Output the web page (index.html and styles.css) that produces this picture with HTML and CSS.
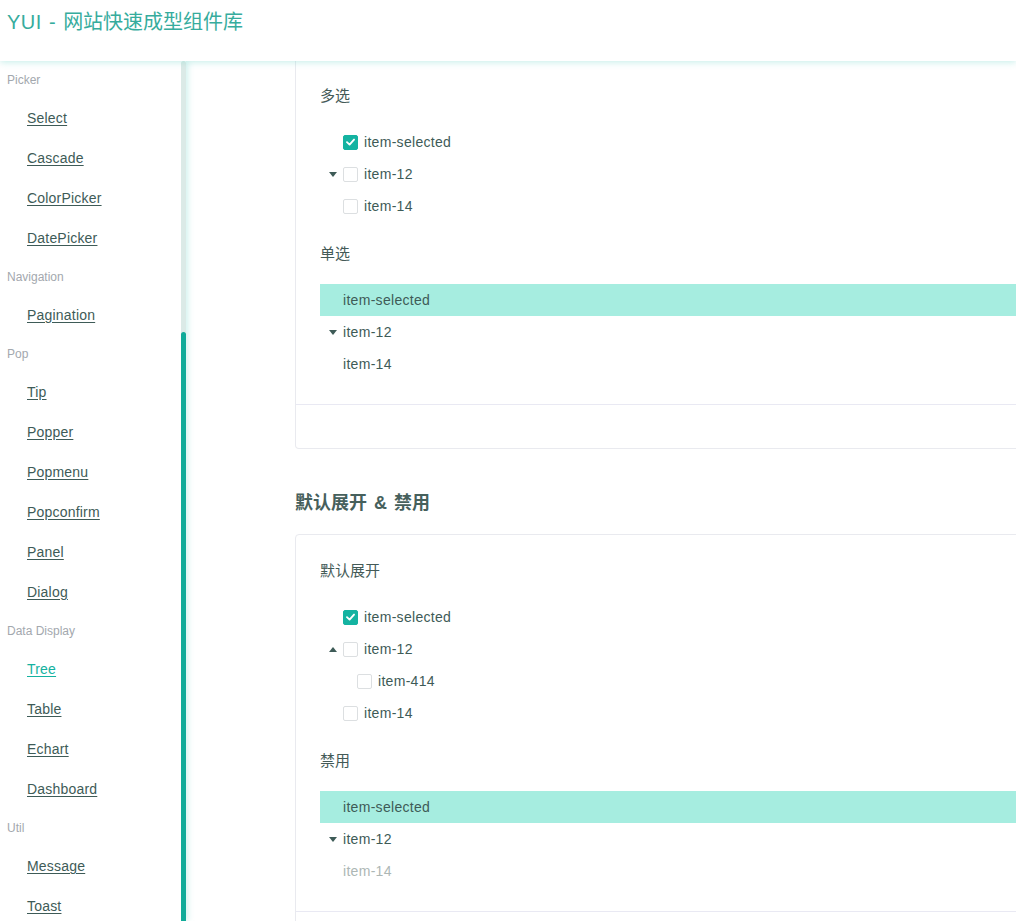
FILE: index.html
```html
<!DOCTYPE html>
<html lang="zh-CN">
<head>
<meta charset="utf-8">
<title>YUI - 网站快速成型组件库</title>
<link rel="stylesheet" href="styles.css">
</head>
<body>
<header class="header">
  <div class="brand"><span class="brand-en">YUI - </span>网站快速成型组件库</div>
</header>
<div class="layout">
  <aside class="sidebar">
    <nav class="nav">
      <div class="nav-cat">Picker</div>
      <a class="nav-link" href="#">Select</a>
      <a class="nav-link" href="#">Cascade</a>
      <a class="nav-link" href="#">ColorPicker</a>
      <a class="nav-link" href="#">DatePicker</a>
      <div class="nav-cat">Navigation</div>
      <a class="nav-link" href="#">Pagination</a>
      <div class="nav-cat">Pop</div>
      <a class="nav-link" href="#">Tip</a>
      <a class="nav-link" href="#">Popper</a>
      <a class="nav-link" href="#">Popmenu</a>
      <a class="nav-link" href="#">Popconfirm</a>
      <a class="nav-link" href="#">Panel</a>
      <a class="nav-link" href="#">Dialog</a>
      <div class="nav-cat">Data Display</div>
      <a class="nav-link active" href="#">Tree</a>
      <a class="nav-link" href="#">Table</a>
      <a class="nav-link" href="#">Echart</a>
      <a class="nav-link" href="#">Dashboard</a>
      <div class="nav-cat">Util</div>
      <a class="nav-link" href="#">Message</a>
      <a class="nav-link" href="#">Toast</a>
    </nav>
    <div class="scroll-track"><div class="scroll-thumb"></div></div>
  </aside>
  <main class="main">
    <div class="content">
      <section class="card card-cont">
        <div class="card-body">
          <div class="demo-label">多选</div>
          <ul class="tree">
            <li class="row"><span class="slot"></span><span class="cb checked"><svg viewBox="0 0 14 14" width="14" height="14"><polyline points="3.2,7.2 6,9.8 10.8,4.4" fill="none" stroke="#fff" stroke-width="2" stroke-linecap="round" stroke-linejoin="round"/></svg></span><span class="txt">item-selected</span></li>
            <li class="row"><span class="slot"><i class="caret down"></i></span><span class="cb"></span><span class="txt">item-12</span></li>
            <li class="row"><span class="slot"></span><span class="cb"></span><span class="txt">item-14</span></li>
          </ul>
          <div class="demo-label">单选</div>
          <ul class="tree tree-last">
            <li class="row selected"><span class="slot"></span><span class="txt">item-selected</span></li>
            <li class="row"><span class="slot"><i class="caret down"></i></span><span class="txt">item-12</span></li>
            <li class="row"><span class="slot"></span><span class="txt">item-14</span></li>
          </ul>
        </div>
        <div class="card-foot"></div>
      </section>

      <h2 class="section-title">默认展开 &amp; 禁用</h2>

      <section class="card">
        <div class="card-body">
          <div class="demo-label">默认展开</div>
          <ul class="tree">
            <li class="row"><span class="slot"></span><span class="cb checked"><svg viewBox="0 0 14 14" width="14" height="14"><polyline points="3.2,7.2 6,9.8 10.8,4.4" fill="none" stroke="#fff" stroke-width="2" stroke-linecap="round" stroke-linejoin="round"/></svg></span><span class="txt">item-selected</span></li>
            <li class="row"><span class="slot"><i class="caret up"></i></span><span class="cb"></span><span class="txt">item-12</span></li>
            <li class="row child"><span class="slot"></span><span class="cb"></span><span class="txt">item-414</span></li>
            <li class="row"><span class="slot"></span><span class="cb"></span><span class="txt">item-14</span></li>
          </ul>
          <div class="demo-label">禁用</div>
          <ul class="tree tree-last">
            <li class="row selected"><span class="slot"></span><span class="txt">item-selected</span></li>
            <li class="row"><span class="slot"><i class="caret down"></i></span><span class="txt">item-12</span></li>
            <li class="row disabled"><span class="slot"></span><span class="txt">item-14</span></li>
          </ul>
        </div>
        <div class="card-foot"></div>
      </section>
    </div>
  </main>
</div>
</body>
</html>
```

FILE: styles.css
```css
* { box-sizing: border-box; }

html, body {
  margin: 0;
  padding: 0;
  height: 100%;
}

body {
  font-family: "Liberation Sans", "Noto Sans CJK SC", sans-serif;
  color: #3e5b57;
  background: #fff;
  display: flex;
  flex-direction: column;
  height: 100vh;
  overflow: hidden;
}

.header {
  height: 61px;
  flex: 0 0 61px;
  padding: 8px 7px 0;
  background: #fff;
  box-shadow: 0 1px 7px rgba(120, 215, 205, 0.45);
  position: relative;
  z-index: 2;
}

.brand {
  font-size: 20px;
  line-height: 28px;
  color: #36ac9d;
}

.brand-en {
  letter-spacing: 0.5px;
  word-spacing: 1px;
}

.layout {
  flex: 1;
  min-height: 0;
  display: flex;
}

.sidebar {
  width: 186px;
  flex: 0 0 186px;
  display: flex;
  background: #fff;
  box-shadow: 2px 0 6px rgba(120, 215, 205, 0.35);
  position: relative;
  z-index: 1;
}

.nav {
  width: 181px;
  overflow: hidden;
  display: flex;
  flex-direction: column;
}

.nav-cat {
  height: 37px;
  flex: 0 0 37px;
  line-height: 39px;
  padding-left: 7px;
  font-size: 12px;
  color: #a3a8ae;
}

.nav-link {
  height: 40px;
  flex: 0 0 40px;
  line-height: 40px;
  padding-left: 27px;
  font-size: 14px;
  letter-spacing: 0.2px;
  color: #3e5b57;
  text-decoration: underline;
  text-underline-offset: 2px;
  align-self: flex-start;
}

.nav-link.active {
  color: #14b2a0;
}

.scroll-track {
  width: 5px;
  flex: 0 0 5px;
  background: #dbeae7;
  border-radius: 3px 3px 0 0;
}

.scroll-thumb {
  margin-top: 271px;
  height: 600px;
  background: #10ab99;
  border-radius: 3px;
}

.main {
  flex: 1;
  min-width: 0;
  overflow: hidden;
  padding-left: 109px;
}

.content {
  width: 760px;
}

.card {
  border: 1px solid #e9eaef;
  border-radius: 4px;
  background: #fff;
}

.card-cont {
  border-top: none;
  border-radius: 0 0 4px 4px;
}

.card-body {
  padding: 25px 0 24px 24px;
}

.card-cont .card-body {
  padding-top: 24px;
}

.card-foot {
  height: 44px;
  border-top: 1px solid #e9e9f3;
}

.demo-label {
  font-size: 15px;
  line-height: 22px;
  height: 22px;
  color: #445a57;
  margin-bottom: 19px;
}

.tree {
  list-style: none;
  margin: 0 0 21px;
  padding: 0;
}

.tree-last {
  margin-bottom: 0;
}

.row {
  height: 32px;
  display: flex;
  align-items: center;
  font-size: 14px;
  letter-spacing: 0.3px;
  color: #3e5b57;
}

.row.child {
  padding-left: 14px;
}

.row.selected {
  background: #a6ede0;
}

.row.disabled {
  color: #adb7b5;
}

.slot {
  width: 23px;
  flex: 0 0 23px;
  display: flex;
  align-items: center;
  padding-left: 9px;
}

.caret {
  display: block;
  width: 0;
  height: 0;
  border-left: 4px solid transparent;
  border-right: 4px solid transparent;
}

.caret.down {
  border-top: 5px solid #3e5b57;
}

.caret.up {
  border-bottom: 5px solid #3e5b57;
}

.cb {
  width: 15px;
  height: 15px;
  flex: 0 0 15px;
  border: 1px solid #dcdfe1;
  border-radius: 2px;
  background: #fff;
  margin-right: 6px;
  display: flex;
  align-items: center;
  justify-content: center;
}

.cb.checked {
  background: #14b3a1;
  border-color: #14b3a1;
}

.cb svg {
  display: block;
}

.txt {
  white-space: nowrap;
}

.section-title {
  margin: 41px 0 18px;
  font-size: 18px;
  line-height: 26px;
  font-weight: bold;
  word-spacing: 2px;
  color: #46605c;
}
```
